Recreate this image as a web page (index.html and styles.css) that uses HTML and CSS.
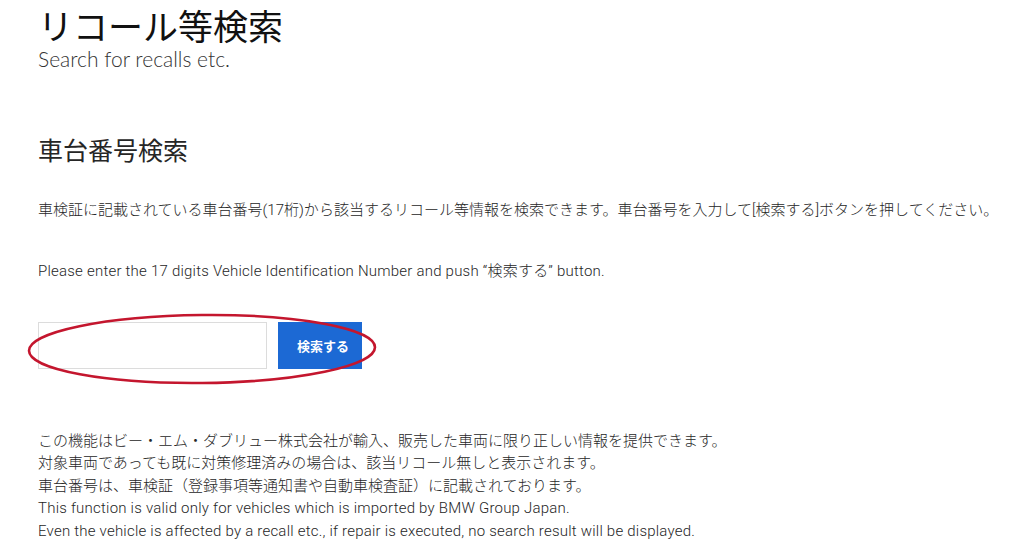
FILE: index.html
```html
<!DOCTYPE html>
<html>
<head>
    <meta charset="utf-8">
    <link rel="stylesheet" href="styles.css">
    <title>リコール等検索</title>
</head>
<body>

    <div class="container">
      <h1 class="title">リコール等検索</h1>
      <p class="subtitle">Search for recalls etc.</p>

      <h2 class="section">車台番号検索</h2>
      <p class="lead">車検証に記載されている車台番号(17桁)から該当するリコール等情報を検索できます。車台番号を入力して[検索する]ボタンを押してください。</p>
      <p class="lead en">Please enter the 17 digits Vehicle Identification Number and push “検索する” button.</p>

      <form class="search">
        <input class="vin" type="text">
        <button class="submit" type="button">検索する</button>
        <svg class="mark" width="352" height="74" viewBox="0 0 352 74">
          <ellipse cx="176" cy="37" rx="173" ry="34" fill="none" stroke="#c4162e" stroke-width="2.6" transform="rotate(-0.6 176 37)"/>
        </svg>
      </form>

      <div class="notes">
        <p>この機能はビー・エム・ダブリュー株式会社が輸入、販売した車両に限り正しい情報を提供できます。</p>
        <p>対象車両であっても既に対策修理済みの場合は、該当リコール無しと表示されます。</p>
        <p>車台番号は、車検証（登録事項等通知書や自動車検査証）に記載されております。</p>
        <p class="en">This function is valid only for vehicles which is imported by BMW Group Japan.</p>
        <p class="en">Even the vehicle is affected by a recall etc., if repair is executed, no search result will be displayed.</p>
      </div>
    </div>

</body>
</html>
```

FILE: styles.css
```css
/* general styling */
* {
  box-sizing: border-box;
  margin: 0;
  padding: 0;
}

html, body {
  background: #fff;
}

body {
  color: #262626;
  font-family: Roboto, "Noto Sans CJK JP", sans-serif;
}

.container {
  padding: 6px 0 0 38px;
}

.title {
  color: #111;
  font-family: Lato, "Noto Sans CJK JP", sans-serif;
  font-size: 35px;
  font-weight: normal;
  line-height: 40px;
}

.subtitle {
  color: #333;
  font-family: Lato, sans-serif;
  font-size: 21px;
  font-weight: 300;
  line-height: 26px;
}

.section {
  color: #262626;
  font-size: 25px;
  font-weight: normal;
  line-height: 30px;
  margin-top: 65px;
}

.lead {
  font-size: 15px;
  font-weight: 300;
  line-height: 20px;
  margin-top: 33px;
}

.lead + .lead {
  margin-top: 41px;
}

.en {
  letter-spacing: .22px;
}

.search {
  display: flex;
  gap: 11px;
  margin-top: 41px;
  position: relative;
  width: 324px;
}

.vin {
  border: 1px solid #dcdcdc;
  height: 47px;
  width: 229px;
}

.submit {
  background: #1c69d4;
  border: none;
  color: #fff;
  font-family: "Noto Sans CJK JP", sans-serif;
  font-size: 13px;
  font-weight: bold;
  height: 47px;
  padding-left: 6px;
  width: 84px;
}

.mark {
  left: -12px;
  position: absolute;
  top: -10px;
}

.notes {
  font-size: 15px;
  font-weight: 300;
  line-height: 22.4px;
  margin-top: 61px;
}
```
